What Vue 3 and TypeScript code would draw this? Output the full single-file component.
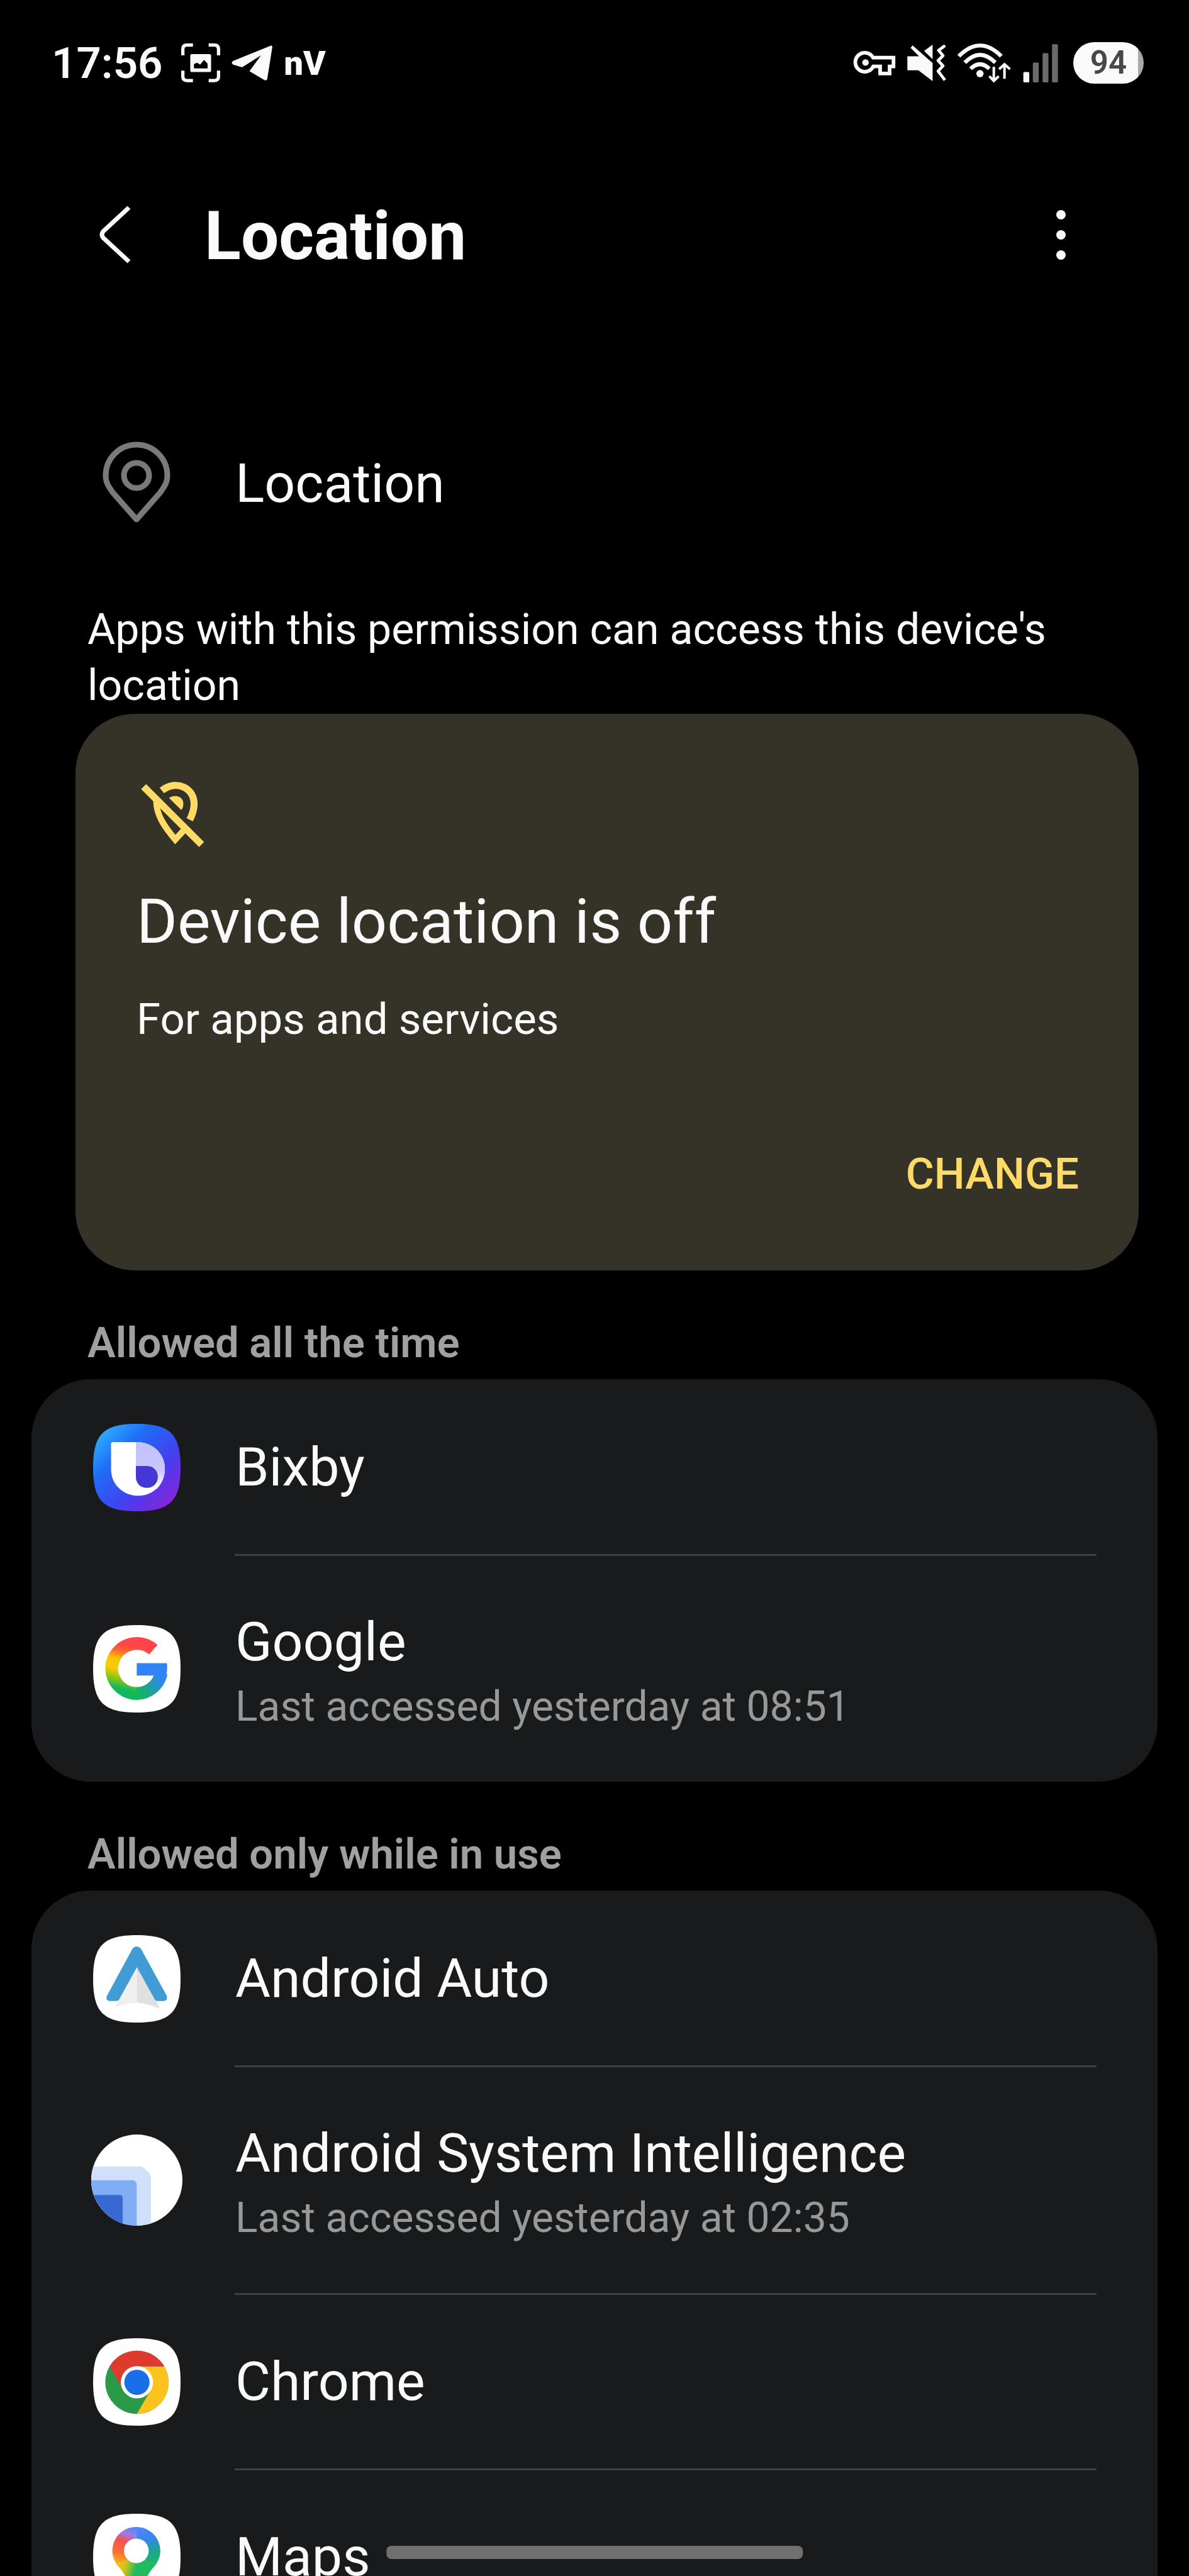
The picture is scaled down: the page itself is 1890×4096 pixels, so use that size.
<script setup lang="ts">
interface AppEntry {
  id: string
  name: string
  accessed?: string
}

interface AppGroup {
  title: string
  apps: AppEntry[]
}

const groups: AppGroup[] = [
  {
    title: 'Allowed all the time',
    apps: [
      { id: 'bixby', name: 'Bixby' },
      { id: 'google', name: 'Google', accessed: 'Last accessed yesterday at 08:51' },
    ],
  },
  {
    title: 'Allowed only while in use',
    apps: [
      { id: 'auto', name: 'Android Auto' },
      { id: 'system', name: 'Android System Intelligence', accessed: 'Last accessed yesterday at 02:35' },
      { id: 'chrome', name: 'Chrome' },
      { id: 'maps', name: 'Maps' },
    ],
  },
]

const squircle =
  'm0 211.5c0-161 50-211.5 211.5-211.5s211.5 50 211.5 211.5-50 211.5-211.5 211.5-211.5-50-211.5-211.5z'
</script>

<template>
  <div class="screen">
    <div class="status">
      <div class="status-left">
        <span class="clock">17:56</span>
        <svg class="capture" viewBox="693 92 189 189" aria-hidden="true">
          <path
            d="M701 150V120Q701 100 721 100H750M826 100H854Q874 100 874 120V150M874 224V252Q874 272 854 272H826M750 272H721Q701 272 701 252V224"
            fill="none" stroke="#fafafa" stroke-width="16" />
          <rect x="737" y="144" width="101" height="87" rx="8" fill="#fafafa" />
          <path d="M755 213V192L770 186L785 195L804 172L821 190V213Z" fill="#000" />
        </svg>
        <svg class="telegram" viewBox="942 108 194 168" aria-hidden="true">
          <path
            d="M1126 111Q1137 107 1136 117L1112 268Q1108 280 1097 273L1027 232L1082 156L992 213L949 200Q936 190 950 182Z"
            fill="#fafafa" />
        </svg>
        <span class="carrier">nV</span>
      </div>
      <div class="status-right">
        <svg class="key" viewBox="115 133 197 117" aria-hidden="true">
          <path d="M207 167H302V208H284V241H240V208H208A44 44 0 1 1 207 167Z" fill="none" stroke="#fafafa"
            stroke-width="17" />
          <circle cx="172" cy="190" r="15" fill="#fafafa" />
        </svg>
        <svg class="mute" viewBox="368 103 182 172" aria-hidden="true">
          <path d="M383 118L393 107L487 190V275L420 224H368V158H423Z" fill="#fafafa" />
          <path d="M487 103V172L447 133Z" fill="#fafafa" />
          <path d="M546 107L515 130L536 155L513 178L536 203L513 228L545 270" fill="none" stroke="#fafafa"
            stroke-width="14" stroke-linejoin="round" />
        </svg>
        <svg class="wifi" viewBox="601 93 253 189" aria-hidden="true">
          <g fill="none" stroke="#fafafa" stroke-width="19">
            <path d="M607 156Q706 56 806 156M635 186Q706 114 778 186M662 215Q706 172 750 215" />
            <path d="M771 206V270M750 250L771 272L794 250M821 262V197M796 217L821 194L847 217" stroke-width="12" />
          </g>
          <circle cx="706" cy="238" r="17" fill="#fafafa" />
        </svg>
        <svg class="signal" viewBox="905 95 167 182" aria-hidden="true">
          <rect x="907" y="228" width="28" height="49" rx="5" fill="#fafafa" />
          <rect x="952" y="183" width="28" height="94" rx="5" fill="#6b6b6b" />
          <rect x="998" y="138" width="28" height="139" rx="5" fill="#6b6b6b" />
          <rect x="1043" y="96" width="28" height="181" rx="5" fill="#6b6b6b" />
        </svg>
        <span class="battery">94</span>
      </div>
    </div>

    <header class="bar">
      <button class="back" type="button" aria-label="Back">
        <svg viewBox="0 0 50 92" aria-hidden="true">
          <path d="M47 3L6 41Q2 46 6 51L47 89" fill="none" stroke="#fafafa" stroke-width="7" />
        </svg>
      </button>
      <h1>Location</h1>
      <button class="more" type="button" aria-label="More options">
        <i></i><i></i><i></i>
      </button>
    </header>

    <main>
      <div class="permission">
        <svg viewBox="0 0 108 130" aria-hidden="true">
          <path d="M54 124L17 82C8 70 5 64 5 54A49 49 0 0 1 103 54C103 64 100 70 91 82Z" fill="none"
            stroke="#7a7a7a" stroke-width="9" stroke-linejoin="round" />
          <circle cx="54" cy="54" r="20" fill="none" stroke="#7a7a7a" stroke-width="9" />
        </svg>
        <span>Location</span>
      </div>
      <p class="about">Apps with this permission can access this device's location</p>

      <section class="notice">
        <svg viewBox="318 330 304 318" aria-hidden="true">
          <g fill="none" stroke="#ffdb66" stroke-width="34">
            <path d="M331 356L611 636" />
            <path d="M419 375C488 320 576 362 575 440C575 468 566 492 554 516" />
            <path d="M393 415C388 490 432 550 484 612L532 560" stroke-width="30" />
          </g>
          <path d="M454 411C480 392 522 402 523 437Q524 456 513 469Z" fill="#ffdb66" />
        </svg>
        <h2>Device location is off</h2>
        <p>For apps and services</p>
        <button type="button">CHANGE</button>
      </section>

      <section v-for="group in groups" :key="group.title">
        <h3>{{ group.title }}</h3>
        <ul class="apps">
          <li v-for="app in group.apps" :key="app.id">
            <button class="app" :class="{ tall: app.accessed }" type="button">
              <span class="icon">
                <svg v-if="app.id === 'bixby'" viewBox="0 0 423 423" aria-hidden="true">
                  <defs>
                    <linearGradient id="bixby-bg" x1="0.05" y1="0.1" x2="0.9" y2="0.95">
                      <stop offset="0" stop-color="#2fb0ff" />
                      <stop offset="0.3" stop-color="#1f6cf8" />
                      <stop offset="0.65" stop-color="#4440ee" />
                      <stop offset="1" stop-color="#8a22d8" />
                    </linearGradient>
                    <linearGradient id="bixby-fold" x1="0" y1="0" x2="0" y2="1">
                      <stop offset="0" stop-color="#bfc2fb" />
                      <stop offset="0.6" stop-color="#cbc6fb" />
                      <stop offset="1" stop-color="#fff" />
                    </linearGradient>
                  </defs>
                  <path :d="squircle" fill="url(#bixby-bg)" />
                  <g transform="translate(-90 -83)">
                    <path
                      d="M186 171H302C380 171 437 228 437 300C437 375 380 431 308 431C235 431 177 375 177 305V180Q177 171 186 171Z"
                      fill="#fff" />
                    <path
                      d="M297 171H302C380 171 437 228 437 300C437 340 425 370 395 400L395 370C410 330 390 287 350 287H297Z"
                      fill="url(#bixby-fold)" />
                    <path
                      d="M297 287H350C382 287 403 310 403 340C403 370 380 393 350 393C318 393 297 370 297 340Z"
                      fill="#4537d6" />
                  </g>
                </svg>

                <svg v-else-if="app.id === 'google'" viewBox="0 0 423 423" aria-hidden="true">
                  <defs>
                    <linearGradient id="g-left" gradientUnits="userSpaceOnUse" x1="330" y1="150" x2="270" y2="420">
                      <stop offset="0.12" stop-color="#ff4549" />
                      <stop offset="0.24" stop-color="#ff6a2c" />
                      <stop offset="0.38" stop-color="#ffc400" />
                      <stop offset="0.56" stop-color="#f5cb08" />
                      <stop offset="0.74" stop-color="#7cc41c" />
                      <stop offset="0.88" stop-color="#12b85c" />
                    </linearGradient>
                    <linearGradient id="g-right" gradientUnits="userSpaceOnUse" x1="315" y1="415" x2="420" y2="330">
                      <stop offset="0" stop-color="#12b85c" />
                      <stop offset="0.5" stop-color="#1f9fa0" />
                      <stop offset="1" stop-color="#3284f5" />
                    </linearGradient>
                  </defs>
                  <path :d="squircle" fill="#fff" />
                  <g transform="translate(-90 -69)">
                    <path d="M381 188A121 121 0 1 0 301 400" fill="none" stroke="url(#g-left)" stroke-width="62" />
                    <path d="M300 400A121 121 0 0 0 419 300" fill="none" stroke="url(#g-right)"
                      stroke-width="62" />
                    <path d="M301 253H447Q451 285 443 313H301Z" fill="#3284f5" />
                  </g>
                </svg>

                <svg v-else-if="app.id === 'auto'" viewBox="0 0 423 423" aria-hidden="true">
                  <path :d="squircle" fill="#fff" />
                  <g transform="translate(-90 -97)">
                    <path d="M303 250L208 416L198 447Q255 422 303 424Z" fill="#efefef" />
                    <path d="M303 250L396 416L412 453Q350 426 303 424Z" fill="#e0e0e0" />
                    <path
                      d="M281 162Q300 141 321 162L446 390Q452 416 430 416H402Q392 416 387 406L302 252L217 406Q212 416 202 416H172Q150 414 156 392Z"
                      fill="#419bd4" />
                  </g>
                </svg>

                <svg v-else-if="app.id === 'system'" class="round" viewBox="80 101 443 443" aria-hidden="true">
                  <defs>
                    <clipPath id="disc"><circle cx="301.5" cy="322.5" r="221.5" /></clipPath>
                  </defs>
                  <g clip-path="url(#disc)">
                    <rect x="80" y="101" width="443" height="443" fill="#fff" />
                    <path d="M80 257H318Q330 257 338 265L362 289Q370 297 370 308V544H80Z" fill="#cfdffc" />
                    <path d="M80 323H278Q301 323 301 348V544H80Z" fill="#81adf5" />
                    <path d="M80 395H218Q233 395 233 410V544H80Z" fill="#3868d2" />
                  </g>
                </svg>

                <svg v-else-if="app.id === 'chrome'" viewBox="0 0 423 423" aria-hidden="true">
                  <path :d="squircle" fill="#fff" />
                  <g transform="translate(-90 -97)">
                    <circle cx="302" cy="310" r="153" fill="#2a9a48" />
                    <path d="M302 310V233.5H434.5A153 153 0 0 1 302 463L368.25 348.25Z" fill="#fcc31e" />
                    <path d="M302 233.5H434.5A153 153 0 0 0 169.5 233.5L235.75 348.25L302 310Z" fill="#de3a2e" />
                    <circle cx="302" cy="310" r="78" fill="#fff" />
                    <circle cx="302" cy="310" r="61" fill="#1a6fe8" />
                  </g>
                </svg>

                <svg v-else viewBox="0 0 423 423" aria-hidden="true">
                  <defs>
                    <linearGradient id="m-left" gradientUnits="userSpaceOnUse" x1="215" y1="70" x2="150" y2="270">
                      <stop offset="0" stop-color="#4f88f6" />
                      <stop offset="0.2" stop-color="#a478e4" />
                      <stop offset="0.38" stop-color="#f4524e" />
                      <stop offset="0.65" stop-color="#fb6d34" />
                      <stop offset="0.95" stop-color="#f3c317" />
                    </linearGradient>
                    <linearGradient id="m-right" gradientUnits="userSpaceOnUse" x1="209" y1="70" x2="260" y2="260">
                      <stop offset="0" stop-color="#4f88f6" />
                      <stop offset="0.35" stop-color="#3487ea" />
                      <stop offset="0.65" stop-color="#1ba58f" />
                      <stop offset="1" stop-color="#20ba60" />
                    </linearGradient>
                    <linearGradient id="m-tail" gradientUnits="userSpaceOnUse" x1="125" y1="250" x2="205" y2="270">
                      <stop offset="0" stop-color="#f3c317" />
                      <stop offset="0.4" stop-color="#c9c41c" />
                      <stop offset="1" stop-color="#20ba60" />
                    </linearGradient>
                  </defs>
                  <path :d="squircle" fill="#fff" />
                  <path d="M209 92A87 87 0 0 0 148 242" fill="none" stroke="url(#m-left)" stroke-width="56" />
                  <path d="M208 92A87 87 0 0 1 270 242" fill="none" stroke="url(#m-right)" stroke-width="56" />
                  <path
                    d="M114 243C138 275 160 300 174 342Q209 384 244 342C258 300 280 275 304 243L251 223Q209 255 167 223Z"
                    fill="url(#m-tail)" />
                </svg>
              </span>
              <span class="label">
                <span class="name">{{ app.name }}</span>
                <span v-if="app.accessed" class="accessed">{{ app.accessed }}</span>
              </span>
            </button>
          </li>
        </ul>
      </section>
    </main>

    <div class="home"></div>
  </div>
</template>

<style>
body {
  margin: 0;
  background: #000;
}
</style>

<style scoped>
.screen {
  position: relative;
  height: 100vh;
  overflow: hidden;
  background: #000;
  color: #fafafa;
  font-family: Roboto, "Liberation Sans", sans-serif;
}

svg {
  display: block;
  flex: none;
}

h1,
h2,
h3,
p,
ul {
  margin: 0;
  padding: 0;
}

button {
  border: 0;
  padding: 0;
  background: none;
  color: inherit;
  font: inherit;
  text-align: left;
}

.status {
  display: flex;
  align-items: center;
  justify-content: space-between;
  height: 200px;
  padding: 0 72px 0 82px;
}

.status-left,
.status-right {
  display: flex;
  align-items: center;
}

.status-left {
  gap: 18px;
}

.status-right {
  gap: 18px;
}

.clock {
  margin-right: 12px;
  font-size: 69px;
  font-weight: 600;
}

.capture {
  width: 62px;
  height: 62px;
}

.telegram {
  width: 65px;
  height: 56px;
}

.carrier {
  font-size: 54px;
  font-weight: 900;
}

.key {
  width: 68px;
  height: 40px;
}

.mute {
  width: 62px;
  height: 58px;
}

.wifi {
  width: 86px;
  height: 64px;
}

.signal {
  width: 56px;
  height: 61px;
}

.battery {
  width: 112px;
  margin-left: 6px;
  border-radius: 33px;
  background: linear-gradient(90deg, #fafafa 92%, #a9a9a9 92%);
  color: #484848;
  font-size: 51px;
  font-weight: 600;
  line-height: 66px;
  text-align: center;
}

.bar {
  display: flex;
  align-items: center;
  height: 146px;
  margin-top: 100px;
  padding: 0 162px 0 158px;
}

.back {
  width: 50px;
}

.back svg {
  width: 50px;
  height: 92px;
}

h1 {
  flex: 1;
  margin-left: 117px;
  padding-top: 4px;
  font-size: 107px;
  font-weight: 700;
}

.more {
  display: flex;
  flex-direction: column;
  align-items: center;
  gap: 17px;
  width: 84px;
}

.more i {
  width: 15px;
  height: 15px;
  border-radius: 50%;
  background: #fafafa;
}

.permission {
  display: flex;
  align-items: center;
  gap: 103px;
  margin-top: 254px;
  padding-left: 163px;
  font-size: 86px;
  line-height: 130px;
}

.permission svg {
  width: 108px;
  height: 130px;
}

.permission span {
  padding-top: 4px;
}

.about {
  margin-top: 123px;
  padding: 0 139px;
  font-size: 68px;
  line-height: 89px;
}

.notice {
  display: flex;
  flex-direction: column;
  align-items: flex-start;
  margin: 0 80px 0 120px;
  padding: 107px 95px 108px 97px;
  border-radius: 94px;
  background: #353227;
}

.notice svg {
  width: 100px;
  height: 105px;
  margin-left: 7px;
}

h2 {
  margin-top: 60px;
  font-size: 99px;
  font-weight: 400;
  line-height: 116px;
}

.notice p {
  margin-top: 53px;
  font-size: 69px;
  line-height: 90px;
}

.notice button {
  align-self: flex-end;
  margin-top: 156px;
  color: #ffdb66;
  font-size: 69px;
  font-weight: 500;
  line-height: 90px;
}

h3 {
  padding: 75px 139px 18px;
  color: #a0a0a0;
  font-size: 67px;
  font-weight: 600;
  line-height: 80px;
}

.apps {
  margin: 0 50px;
  padding-top: 2px;
  border-radius: 94px;
  background: #191a1b;
  list-style: none;
}

.app {
  display: flex;
  align-items: center;
  width: 100%;
  height: 276px;
  padding-left: 95px;
}

.app.tall {
  height: 359px;
}

li:not(:last-child)::after {
  content: "";
  display: block;
  height: 3px;
  margin: 0 97px 0 323px;
  background: #404040;
}

.icon {
  display: flex;
  align-items: center;
  justify-content: center;
  width: 145px;
  margin-right: 84px;
}

.icon svg {
  width: 139px;
  height: 139px;
}

.icon .round {
  width: 145px;
  height: 145px;
}

.label {
  display: flex;
  flex-direction: column;
}

.name {
  font-size: 86px;
  line-height: 120px;
}

.accessed {
  color: #989898;
  font-size: 66px;
  line-height: 86px;
}

.home {
  position: absolute;
  bottom: 27px;
  left: 50%;
  width: 35%;
  height: 21px;
  border-radius: 8px;
  background: #707070;
  transform: translateX(-50%);
}
</style>
